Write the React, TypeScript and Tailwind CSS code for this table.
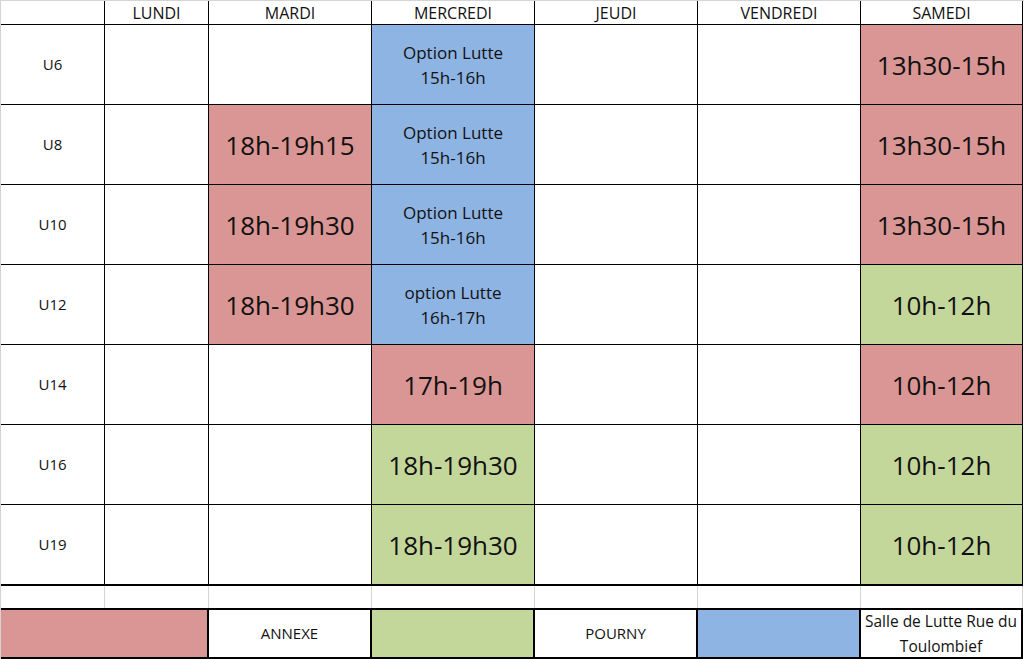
import React from "react";

type Slot = { text: string; color: "pink" | "green" | "blue"; small?: string };

const days = ["LUNDI", "MARDI", "MERCREDI", "JEUDI", "VENDREDI", "SAMEDI"];

const bg = {
  pink: "bg-[#da9694]",
  green: "bg-[#c4d79b]",
  blue: "bg-[#8db4e2]",
};

// one entry per day (lundi -> samedi), null = empty cell
const rows: { name: string; slots: (Slot | null)[] }[] = [
  {
    name: "U6",
    slots: [null, null, { text: "Option Lutte", small: "15h-16h", color: "blue" }, null, null, { text: "13h30-15h", color: "pink" }],
  },
  {
    name: "U8",
    slots: [null, { text: "18h-19h15", color: "pink" }, { text: "Option Lutte", small: "15h-16h", color: "blue" }, null, null, { text: "13h30-15h", color: "pink" }],
  },
  {
    name: "U10",
    slots: [null, { text: "18h-19h30", color: "pink" }, { text: "Option Lutte", small: "15h-16h", color: "blue" }, null, null, { text: "13h30-15h", color: "pink" }],
  },
  {
    name: "U12",
    slots: [null, { text: "18h-19h30", color: "pink" }, { text: "option Lutte", small: "16h-17h", color: "blue" }, null, null, { text: "10h-12h", color: "green" }],
  },
  {
    name: "U14",
    slots: [null, null, { text: "17h-19h", color: "pink" }, null, null, { text: "10h-12h", color: "pink" }],
  },
  {
    name: "U16",
    slots: [null, null, { text: "18h-19h30", color: "green" }, null, null, { text: "10h-12h", color: "green" }],
  },
  {
    name: "U19",
    slots: [null, null, { text: "18h-19h30", color: "green" }, null, null, { text: "10h-12h", color: "green" }],
  },
];

const cell = "flex items-center justify-center text-center border-r border-b border-black";

export default function App() {
  return (
    <div
      className="w-[1024px] h-[659px] bg-white text-[#111] border-l border-t border-[#d4d4d4] overflow-hidden"
      style={{ fontFamily: '"Open Sans", "Noto Sans", sans-serif' }}
    >
      <div className="grid grid-cols-[104px_104px_163px_163px_163px_163px_162px]">
        {/* header */}
        <div className={`${cell} h-[24px]`} />
        {days.map((d) => (
          <div key={d} className={`${cell} h-[24px] text-[16px] leading-none`}>
            {d}
          </div>
        ))}

        {/* rows */}
        {rows.map((r, i) => {
          const last = i === rows.length - 1;
          const h = last ? "h-[81px] border-b-2" : "h-[80px]";
          return (
            <React.Fragment key={r.name}>
              <div className={`${cell} ${h} text-[15px]`}>{r.name}</div>
              {r.slots.map((s, j) => (
                <div key={j} className={`${cell} ${h} ${s ? bg[s.color] : ""}`}>
                  {s &&
                    (s.small ? (
                      <div className="text-[17px] leading-[25px]">
                        <div>{s.text}</div>
                        <div>{s.small}</div>
                      </div>
                    ) : (
                      <span className="text-[26px] leading-none">{s.text}</span>
                    ))}
                </div>
              ))}
            </React.Fragment>
          );
        })}

        {/* empty spacer row */}
        {Array.from({ length: 7 }).map((_, k) => (
          <div key={k} className="h-[22px] border-r border-[#d4d4d4]" />
        ))}

        {/* legend */}
        <div className="col-span-2 h-[51px] bg-[#da9694] border-t-2 border-b-2 border-r-2 border-black" />
        <div className="h-[51px] flex items-center justify-center text-[15px] border-t-2 border-b-2 border-r-2 border-black">
          ANNEXE
        </div>
        <div className="h-[51px] bg-[#c4d79b] border-t-2 border-b-2 border-r-2 border-black" />
        <div className="h-[51px] flex items-center justify-center text-[15px] border-t-2 border-b-2 border-r-2 border-black">
          POURNY
        </div>
        <div className="h-[51px] bg-[#8db4e2] border-t-2 border-b-2 border-r-2 border-black" />
        <div className="h-[51px] flex items-center justify-center text-center text-[15.5px] leading-[25px] whitespace-nowrap border-t-2 border-b-2 border-r-2 border-black">
          <div>
            Salle de Lutte Rue du
            <br />
            Toulombief
          </div>
        </div>
      </div>
    </div>
  );
}
